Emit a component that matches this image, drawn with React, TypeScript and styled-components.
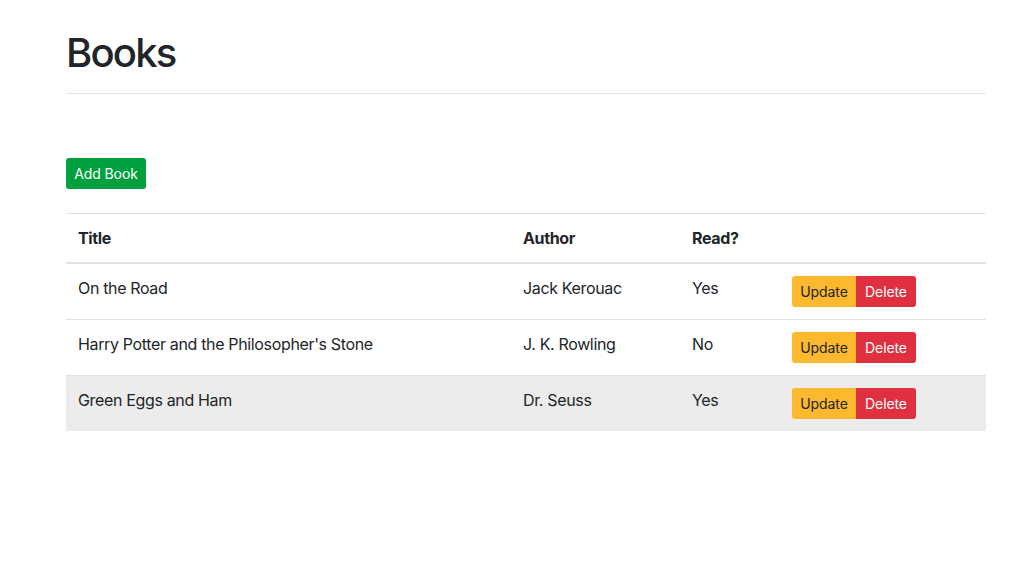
import React from "react";
import styled, { createGlobalStyle } from "styled-components";

const GlobalStyle = createGlobalStyle`
  html, body { margin: 0; padding: 0; background: #fff; }
  body {
    font-family: Inter, "Liberation Sans", Arial, sans-serif;
    font-size: 16px;
    line-height: 1.5;
    color: #212529;
    letter-spacing: -0.35px;
  }
  * { box-sizing: border-box; }
`;

const Page = styled.div`
  padding: 29px 45px 0 66px;
`;

const Content = styled.div`
  width: 920px;
`;

const Heading = styled.h1`
  margin: 0 0 8px;
  font-size: 40px;
  font-weight: 500;
  line-height: 1.2;
  letter-spacing: -1.8px;
`;

const Rule = styled.hr`
  margin: 16px 0 0;
  border: 0;
  border-top: 1px solid #e3e3e3;
  height: 0;
`;

const Toolbar = styled.div`
  margin-top: 64px;
  margin-bottom: 24px;
  display: flex;
`;

const Button = styled.button<{ $variant: "success" | "warning" | "danger" }>`
  font-family: inherit;
  font-size: 14px;
  line-height: 21px;
  padding: 5px 8px;
  border: 0;
  cursor: pointer;
  font-weight: 400;
  letter-spacing: -0.1px;
  border-radius: 3px;
  background: ${(p) =>
    p.$variant === "success" ? "#00a03e" : p.$variant === "warning" ? "#fcb92e" : "#e0303f"};
  color: ${(p) => (p.$variant === "warning" ? "#212529" : "#fff")};
`;

const AddButton = styled(Button)`
  width: 80px;
  height: 31px;
  padding: 0;
`;

const Group = styled.div`
  display: inline-flex;
  & > ${Button}:first-child { border-radius: 3px 0 0 3px; width: 64px; padding: 0; height: 31px; }
  & > ${Button}:last-child { border-radius: 0 3px 3px 0; width: 60px; padding: 0; height: 31px; }
`;

const Table = styled.table`
  width: 920px;
  border-collapse: collapse;
  table-layout: fixed;
`;

const HeadCell = styled.th`
  text-align: left;
  font-weight: 700;
  padding: 12px;
  line-height: 24px;
  vertical-align: bottom;
  border-top: 1px solid #dee2e6;
  border-bottom: 2px solid #dee2e6;
`;

const Row = styled.tr<{ $hover?: boolean }>`
  background: ${(p) => (p.$hover ? "#ececec" : "transparent")};
`;

const Cell = styled.td`
  padding: 12px;
  line-height: 24px;
  vertical-align: top;
  border-top: 1px solid #dee2e6;
`;

const books = [
  { title: "On the Road", author: "Jack Kerouac", read: true },
  { title: "Harry Potter and the Philosopher's Stone", author: "J. K. Rowling", read: false },
  { title: "Green Eggs and Ham", author: "Dr. Seuss", read: true },
];

export default function App() {
  return (
    <>
      <GlobalStyle />
      <Page>
        <Content>
          <Heading>Books</Heading>
          <Rule />
          <Toolbar>
            <AddButton $variant="success">Add Book</AddButton>
          </Toolbar>
          <Table>
            <colgroup>
              <col style={{ width: 445 }} />
              <col style={{ width: 169 }} />
              <col style={{ width: 100 }} />
              <col style={{ width: 206 }} />
            </colgroup>
            <thead>
              <tr>
                <HeadCell>Title</HeadCell>
                <HeadCell>Author</HeadCell>
                <HeadCell>Read?</HeadCell>
                <HeadCell />
              </tr>
            </thead>
            <tbody>
              {books.map((b, i) => (
                <Row key={b.title} $hover={i === 2}>
                  <Cell>{b.title}</Cell>
                  <Cell>{b.author}</Cell>
                  <Cell>{b.read ? "Yes" : "No"}</Cell>
                  <Cell>
                    <Group role="group">
                      <Button $variant="warning">Update</Button>
                      <Button $variant="danger">Delete</Button>
                    </Group>
                  </Cell>
                </Row>
              ))}
            </tbody>
          </Table>
        </Content>
      </Page>
    </>
  );
}
